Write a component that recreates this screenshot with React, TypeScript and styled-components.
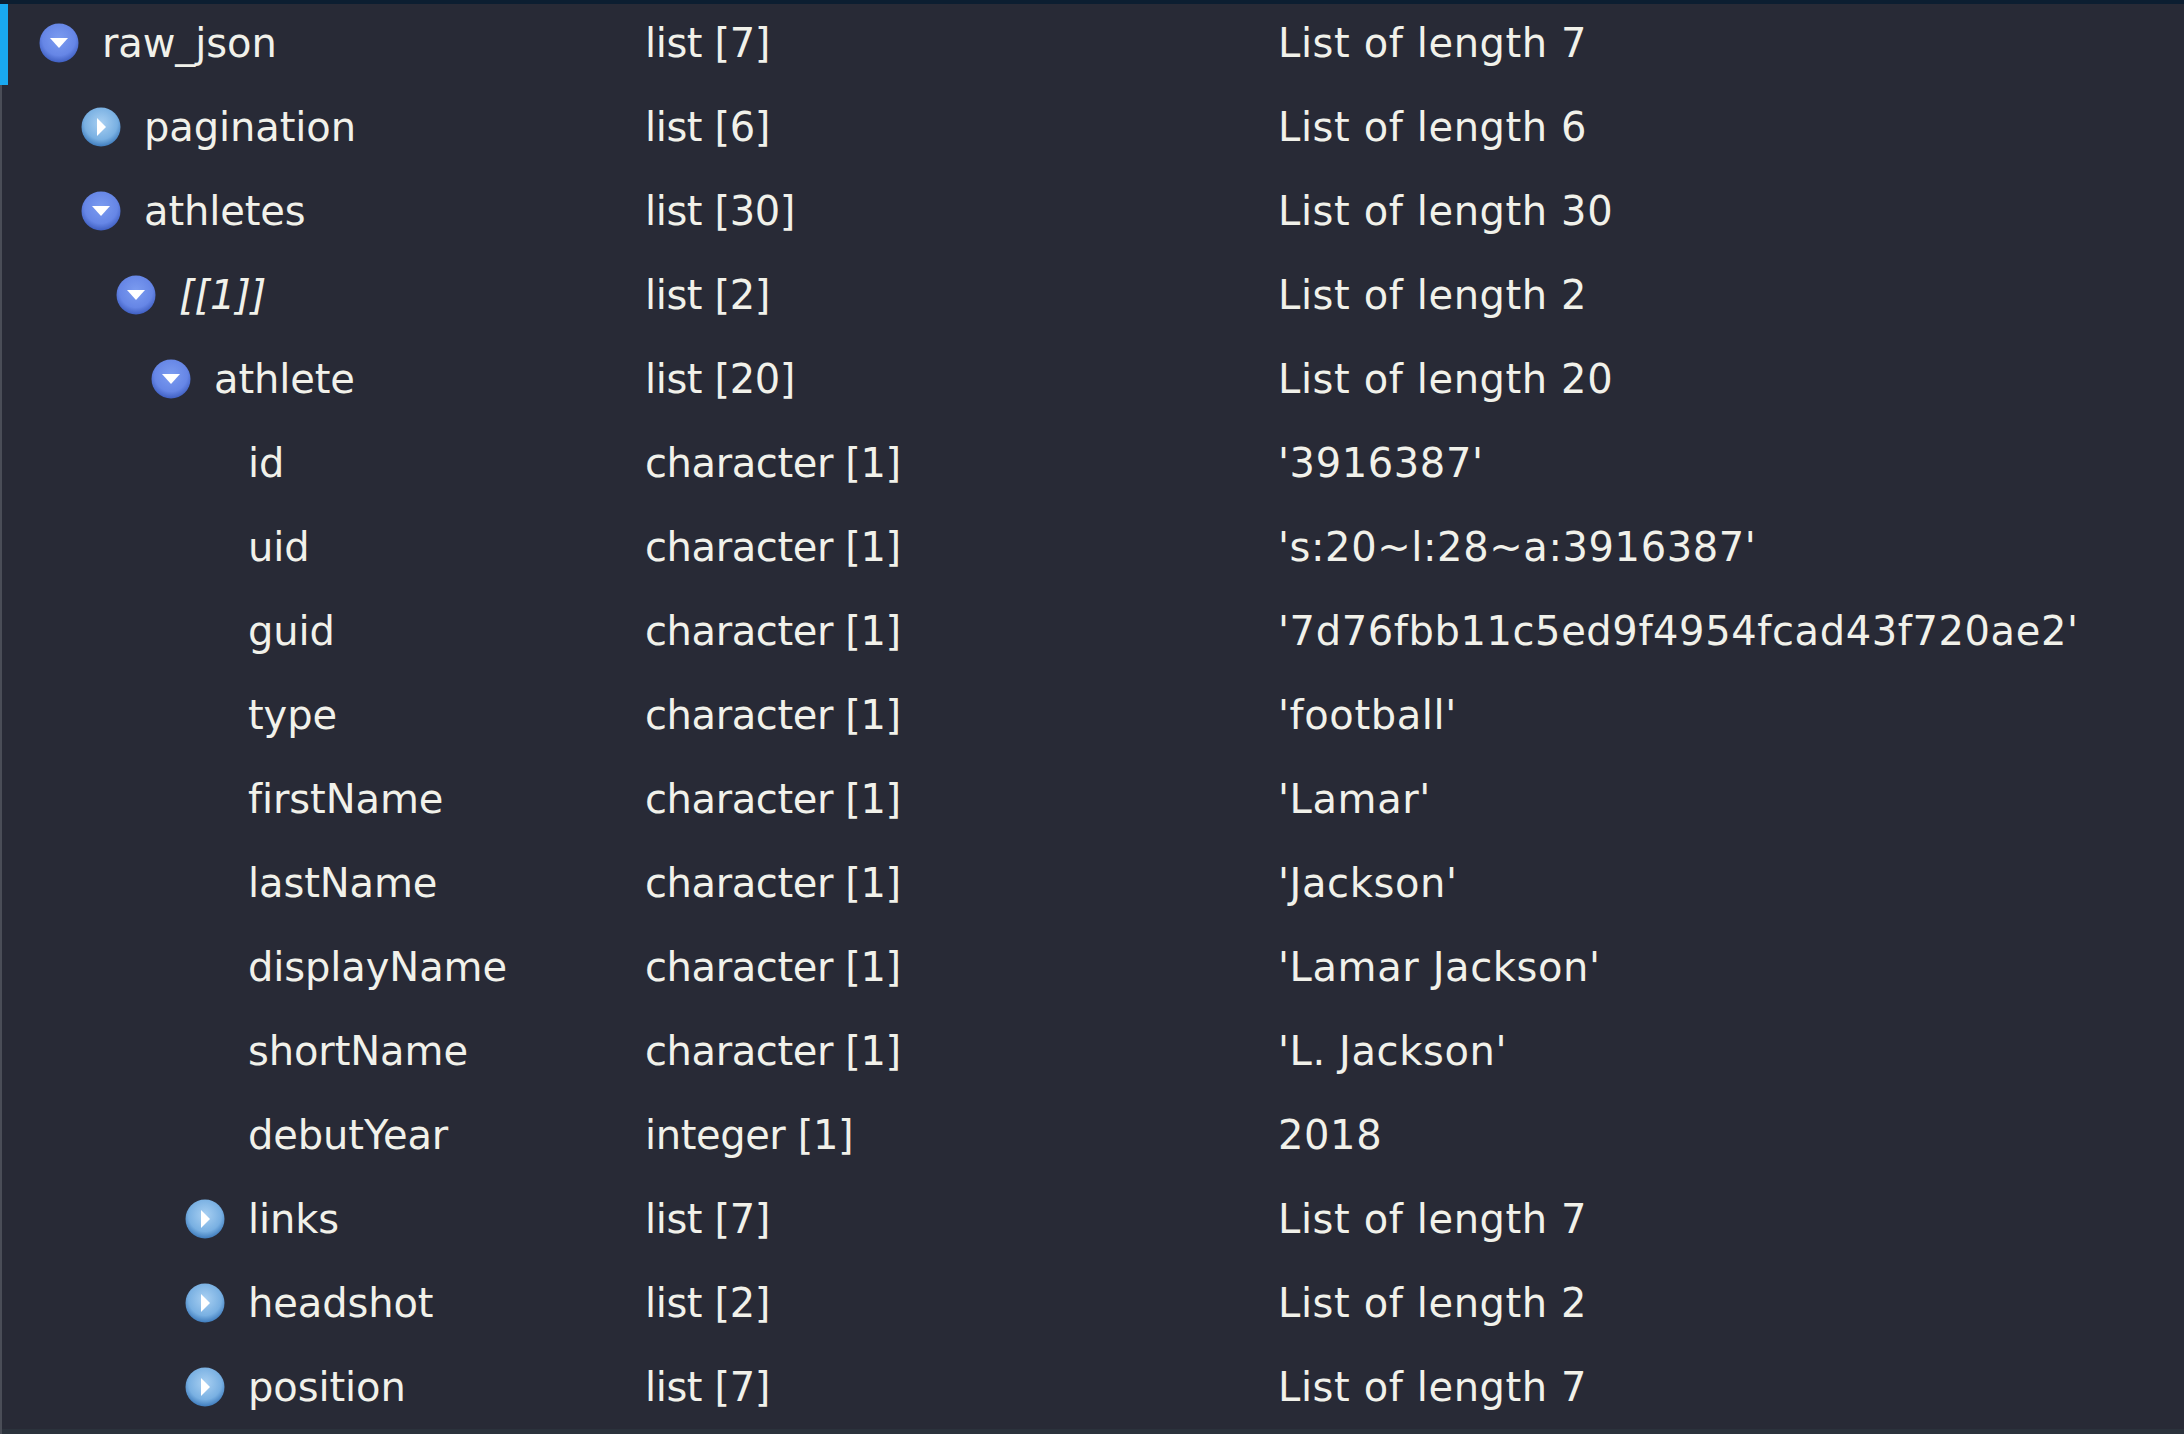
import React from "react";
import styled, { createGlobalStyle } from "styled-components";

const GlobalStyle = createGlobalStyle`
  html, body {
    margin: 0;
    padding: 0;
    background: #282a36;
    overflow: hidden;
  }
  * { box-sizing: border-box; }
`;

const Panel = styled.div`
  width: 2184px;
  height: 1434px;
  display: flex;
  flex-direction: column;
  background: #282a36;
  font-family: "DejaVu Sans", "Liberation Sans", sans-serif;
  font-size: 40px;
  color: #f1f1ea;
`;

const TopBar = styled.div`
  height: 4px;
  flex: none;
  background: #0c1e31;
`;

const List = styled.div`
  display: flex;
  flex-direction: column;
  flex: 1;
`;

const Row = styled.div<{ $selected?: boolean; $first?: boolean }>`
  display: grid;
  grid-template-columns: 645px 633px 1fr;
  align-items: center;
  height: ${(p) => (p.$first ? 81 : 84)}px;
  padding-bottom: ${(p) => (p.$first ? 3 : 0)}px;
  box-shadow: inset ${(p) => (p.$selected ? 8 : 2)}px 0 0
    ${(p) => (p.$selected ? "#19a9f0" : "#4a4d57")};
  flex: none;
`;

const BottomBar = styled.div`
  flex: 1;
  background: #2b323c;
  box-shadow: inset 2px 0 0 #4a4d57;
`;

const INDENT = [39, 81, 116, 151, 185];

const NameCell = styled.div<{ $level: number }>`
  display: flex;
  align-items: center;
  gap: 23px;
  padding-left: ${(p) => INDENT[p.$level]}px;
  white-space: nowrap;
`;

const NameText = styled.span<{ $italic?: boolean }>`
  font-style: ${(p) => (p.$italic ? "italic" : "normal")};
  letter-spacing: -0.1px;
`;

const Spacer = styled.span`
  width: 40px;
  height: 40px;
  flex: none;
`;

const TypeCell = styled.div`
  white-space: nowrap;
  letter-spacing: -0.4px;
`;

const ValueCell = styled.div`
  white-space: nowrap;
  letter-spacing: 0.6px;
`;

const IconSvg = styled.svg`
  width: 40px;
  height: 40px;
  flex: none;
  display: block;
`;

function ToggleIcon({ open, id }: { open: boolean; id: string }) {
  const inner = open ? "#7c9cf0" : "#a9d0f2";
  const mid = open ? "#6686e6" : "#79b0e2";
  const edge = open ? "#3f5fc2" : "#3f7cbd";
  return (
    <IconSvg viewBox="0 0 40 40">
      <defs>
        <radialGradient id={id} cx="50%" cy="40%" r="60%">
          <stop offset="0%" stopColor={inner} />
          <stop offset="70%" stopColor={mid} />
          <stop offset="100%" stopColor={edge} />
        </radialGradient>
      </defs>
      <circle cx="20" cy="20" r="19.5" fill={`url(#${id})`} />
      {open ? (
        <polygon points="11,15 29,15 20,25" fill="#ffffff" />
      ) : (
        <polygon points="16,11 16,29 25,20" fill="#ffffff" />
      )}
    </IconSvg>
  );
}

type Item = {
  level: number;
  icon?: "open" | "closed";
  name: string;
  italic?: boolean;
  type: string;
  value: string;
};

const items: Item[] = [
  { level: 0, icon: "open", name: "raw_json", type: "list [7]", value: "List of length 7" },
  { level: 1, icon: "closed", name: "pagination", type: "list [6]", value: "List of length 6" },
  { level: 1, icon: "open", name: "athletes", type: "list [30]", value: "List of length 30" },
  { level: 2, icon: "open", name: "[[1]]", italic: true, type: "list [2]", value: "List of length 2" },
  { level: 3, icon: "open", name: "athlete", type: "list [20]", value: "List of length 20" },
  { level: 4, name: "id", type: "character [1]", value: "'3916387'" },
  { level: 4, name: "uid", type: "character [1]", value: "'s:20~l:28~a:3916387'" },
  { level: 4, name: "guid", type: "character [1]", value: "'7d76fbb11c5ed9f4954fcad43f720ae2'" },
  { level: 4, name: "type", type: "character [1]", value: "'football'" },
  { level: 4, name: "firstName", type: "character [1]", value: "'Lamar'" },
  { level: 4, name: "lastName", type: "character [1]", value: "'Jackson'" },
  { level: 4, name: "displayName", type: "character [1]", value: "'Lamar Jackson'" },
  { level: 4, name: "shortName", type: "character [1]", value: "'L. Jackson'" },
  { level: 4, name: "debutYear", type: "integer [1]", value: "2018" },
  { level: 4, icon: "closed", name: "links", type: "list [7]", value: "List of length 7" },
  { level: 4, icon: "closed", name: "headshot", type: "list [2]", value: "List of length 2" },
  { level: 4, icon: "closed", name: "position", type: "list [7]", value: "List of length 7" },
];

export default function App() {
  return (
    <>
      <GlobalStyle />
      <Panel>
        <TopBar />
        <List>
          {items.map((it, i) => (
            <Row key={i} $first={i === 0} $selected={i === 0}>
              <NameCell $level={it.level}>
                {it.icon ? (
                  <ToggleIcon open={it.icon === "open"} id={`g${i}`} />
                ) : (
                  <Spacer />
                )}
                <NameText $italic={it.italic}>{it.name}</NameText>
              </NameCell>
              <TypeCell>{it.type}</TypeCell>
              <ValueCell>{it.value}</ValueCell>
            </Row>
          ))}
        </List>
        <BottomBar />
      </Panel>
    </>
  );
}
